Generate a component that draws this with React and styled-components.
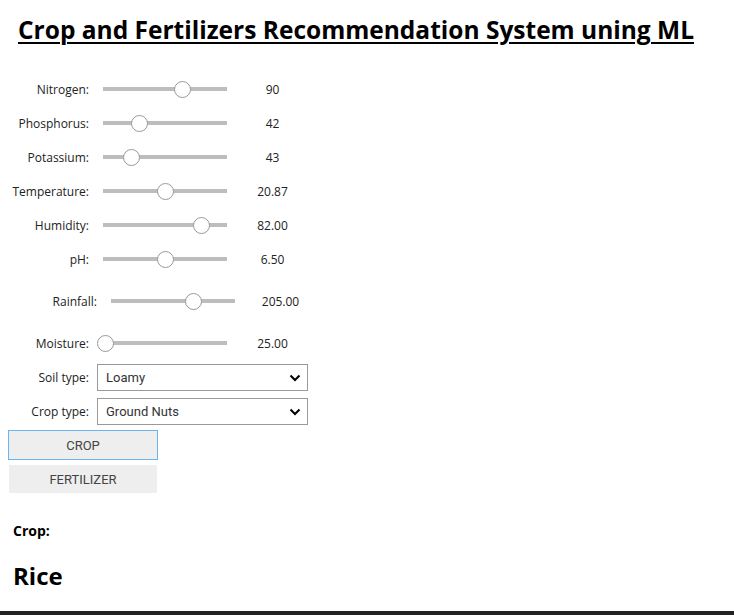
import React from "react";
import styled, { createGlobalStyle } from "styled-components";

const GlobalStyle = createGlobalStyle`
  html, body {
    margin: 0;
    background: #fff;
  }
  body {
    padding: 8px;
    font-family: "Open Sans", "Noto Sans", sans-serif;
    color: #222;
  }
`;

const Page = styled.div`
  display: flex;
  flex-direction: column;
  min-height: 599px;
`;

const Title = styled.h1`
  margin: 6px 0 0 10px;
  font-family: "Open Sans", sans-serif;
  font-weight: 700;
  font-size: 24.5px;
  line-height: 32px;
  letter-spacing: 0;
  text-decoration: underline;
  text-decoration-thickness: 2px;
  text-underline-offset: 3px;
  color: #000;
`;

const Form = styled.div`
  display: flex;
  flex-direction: column;
  margin-top: 26px;
`;

const SliderRow = styled.div`
  display: grid;
  grid-template-columns: 81px 124px 60px;
  column-gap: 14px;
  align-items: center;
  height: 34px;
  margin-top: ${(p) => (p.$spaced ? "8px" : "0")};
  padding-left: ${(p) => p.$shift || 0}px;
`;

const Label = styled.label`
  font-size: 12px;
  text-align: right;
  white-space: nowrap;
  color: #222;
`;

const Track = styled.div`
  position: relative;
  height: 4px;
  background: #bdbdbd;
`;

const Thumb = styled.span`
  position: absolute;
  top: 50%;
  width: 15px;
  height: 15px;
  margin: -8.5px 0 0 -8.5px;
  border-radius: 50%;
  background: #fff;
  border: 1px solid #999;
`;

const Value = styled.span`
  font-size: 12px;
  text-align: center;
  padding-left: 3px;
  color: #222;
`;

const SelectRow = styled.div`
  display: flex;
  align-items: center;
  gap: 8px;
  margin-top: ${(p) => p.$top}px;
  & > label {
    width: 81px;
  }
`;

const SelectBox = styled.div`
  position: relative;
  width: 211px;
  height: 27px;
  box-sizing: border-box;
  border: 1px solid #999;
  background: #fff;
  display: flex;
  align-items: center;
  justify-content: space-between;
  padding: 0 6px 0 8px;
  font-family: Roboto, sans-serif;
  font-size: 13px;
  color: #333;
`;

const Button = styled.button`
  box-sizing: border-box;
  width: ${(p) => (p.$focused ? "150px" : "148px")};
  height: ${(p) => (p.$focused ? "30px" : "28px")};
  margin: ${(p) => (p.$focused ? "5px 0 0 0" : "5px 0 0 1px")};
  background: #eee;
  border: ${(p) => (p.$focused ? "1px solid #6ab4f2" : "none")};
  font-family: Roboto, sans-serif;
  font-size: 13px;
  color: #444;
  text-transform: uppercase;
  padding: 0;
`;

const Result = styled.div`
  margin: 28px 0 0 5px;
`;

const ResultLabel = styled.div`
  font-size: 14px;
  font-weight: 700;
  color: #000;
`;

const ResultValue = styled.div`
  margin-top: 19px;
  font-size: 24px;
  font-weight: 700;
  color: #000;
`;

const Footer = styled.div`
  margin: auto -8px -8px;
  height: 4px;
  background: #222;
`;

const sliders = [
  { label: "Nitrogen:", value: "90", f: 0.647 },
  { label: "Phosphorus:", value: "42", f: 0.29 },
  { label: "Potassium:", value: "43", f: 0.217 },
  { label: "Temperature:", value: "20.87", f: 0.5 },
  { label: "Humidity:", value: "82.00", f: 0.8 },
  { label: "pH:", value: "6.50", f: 0.5 },
  { label: "Rainfall:", value: "205.00", f: 0.67, spaced: true, shift: 8 },
  { label: "Moisture:", value: "25.00", f: 0, spaced: true },
];

function Chevron() {
  return (
    <svg width="12" height="8" viewBox="0 0 12 8">
      <polyline points="1.5,1.5 6,6 10.5,1.5" fill="none" stroke="#000" strokeWidth="2" />
    </svg>
  );
}

function Slider({ f }) {
  return (
    <Track>
      <Thumb style={{ left: `${2 + f * 120}px` }} />
    </Track>
  );
}

export default function App() {
  return (
    <Page>
      <GlobalStyle />
      <Title>Crop and Fertilizers Recommendation System uning ML</Title>
      <Form>
        {sliders.map((s) => (
          <SliderRow key={s.label} $spaced={s.spaced} $shift={s.shift}>
            <Label>{s.label}</Label>
            <Slider f={s.f} />
            <Value>{s.value}</Value>
          </SliderRow>
        ))}
        <SelectRow $top={4}>
          <Label>Soil type:</Label>
          <SelectBox>
            Loamy
            <Chevron />
          </SelectBox>
        </SelectRow>
        <SelectRow $top={7}>
          <Label>Crop type:</Label>
          <SelectBox>
            Ground Nuts
            <Chevron />
          </SelectBox>
        </SelectRow>
        <Button $focused>Crop</Button>
        <Button>Fertilizer</Button>
      </Form>
      <Result>
        <ResultLabel>Crop:</ResultLabel>
        <ResultValue>Rice</ResultValue>
      </Result>
      <Footer />
    </Page>
  );
}
